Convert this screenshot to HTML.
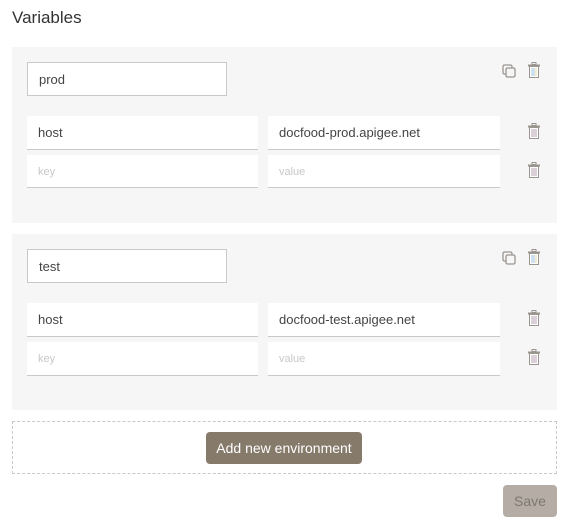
<!DOCTYPE html>
<html><head><style>
body{margin:0;background:#fff;font-family:"Liberation Sans",sans-serif;width:579px;height:532px;position:relative;overflow:hidden}
.a{position:absolute;box-sizing:border-box}
h1{position:absolute;left:12px;top:8px;margin:0;font-size:17px;font-weight:normal;color:#333}
.panel{background:#f6f6f6}
.name{background:#fff;border:1px solid #c9c9c9;font-size:13px;color:#444;padding:9px 11px}
.f{background:#fff;border-bottom:1px solid #c9c9c9;font-size:13px;color:#444;padding:9px 11px}
.ph{color:#c8c8c8;font-size:11px;padding-top:11px}
</style></head><body>
<svg width="0" height="0" style="position:absolute"><defs>
<symbol id="tr" viewBox="0 0 14 16"><rect x="5" y="0.5" width="4" height="2" fill="none" stroke="#9b958f"/><rect x="1" y="2.5" width="12" height="2" fill="#9b958f"/><rect x="2.5" y="4.5" width="9" height="11" fill="#fff" stroke="#9b958f"/><line x1="5" y1="6" x2="5" y2="14" stroke="#b8a0b0"/><line x1="7" y1="6" x2="7" y2="14" stroke="#b8a0b0"/><line x1="9" y1="6" x2="9" y2="14" stroke="#b8a0b0"/></symbol>
<symbol id="trb" viewBox="0 0 14 16"><rect x="5" y="0.5" width="4" height="2" fill="none" stroke="#9b958f"/><rect x="1" y="2.5" width="12" height="2" fill="#9b958f"/><rect x="2.5" y="4.5" width="9" height="11" fill="#fff" stroke="#9b958f"/><line x1="5" y1="6" x2="5" y2="14" stroke="#9cc3e0"/><line x1="7" y1="6" x2="7" y2="14" stroke="#9cc3e0"/><line x1="9" y1="6" x2="9" y2="14" stroke="#e8d8a0"/></symbol>
<symbol id="cp" viewBox="0 0 14 14"><rect x="1" y="1" width="9" height="9" rx="1.5" fill="none" stroke="#9b958f" stroke-width="1.3"/><rect x="4" y="4" width="9" height="9" rx="1.5" fill="#f6f6f6" stroke="#9b958f" stroke-width="1.3"/></symbol>
</defs></svg>
<h1>Variables</h1>

<div class="a panel" style="left:12px;top:47px;width:545px;height:176px"></div>
<div class="a name" style="left:27px;top:62px;width:200px;height:34px">prod</div>
<div class="a f" style="left:27px;top:116px;width:231px;height:34px">host</div>
<div class="a f" style="left:268px;top:116px;width:232px;height:34px">docfood-prod.apigee.net</div>
<div class="a f ph" style="left:27px;top:155px;width:231px;height:33px">key</div>
<div class="a f ph" style="left:268px;top:155px;width:232px;height:33px">value</div>
<svg class="a" style="left:502px;top:64px" width="14" height="14"><use href="#cp"/></svg>
<svg class="a" style="left:527px;top:62px" width="14" height="16"><use href="#trb"/></svg>
<svg class="a" style="left:527px;top:123px" width="14" height="16"><use href="#tr"/></svg>
<svg class="a" style="left:527px;top:162px" width="14" height="16"><use href="#tr"/></svg>

<div class="a panel" style="left:12px;top:234px;width:545px;height:176px"></div>
<div class="a name" style="left:27px;top:249px;width:200px;height:34px">test</div>
<div class="a f" style="left:27px;top:303px;width:231px;height:34px">host</div>
<div class="a f" style="left:268px;top:303px;width:232px;height:34px">docfood-test.apigee.net</div>
<div class="a f ph" style="left:27px;top:342px;width:231px;height:34px">key</div>
<div class="a f ph" style="left:268px;top:342px;width:232px;height:34px">value</div>
<svg class="a" style="left:502px;top:251px" width="14" height="14"><use href="#cp"/></svg>
<svg class="a" style="left:527px;top:249px" width="14" height="16"><use href="#trb"/></svg>
<svg class="a" style="left:527px;top:310px" width="14" height="16"><use href="#tr"/></svg>
<svg class="a" style="left:527px;top:349px" width="14" height="16"><use href="#tr"/></svg>

<div class="a" style="left:12px;top:421px;width:545px;height:53px;border:1px dashed #c8c8c8"></div>
<div class="a" style="left:206px;top:432px;width:156px;height:32px;background:#867a6b;border-radius:4px;color:#fff;font-size:14px;text-align:center;line-height:32px">Add new environment</div>
<div class="a" style="left:503px;top:485px;width:54px;height:32px;background:#b5ada5;border-radius:4px;color:#7e7770;font-size:14px;text-align:center;line-height:32px">Save</div>
</body></html>
